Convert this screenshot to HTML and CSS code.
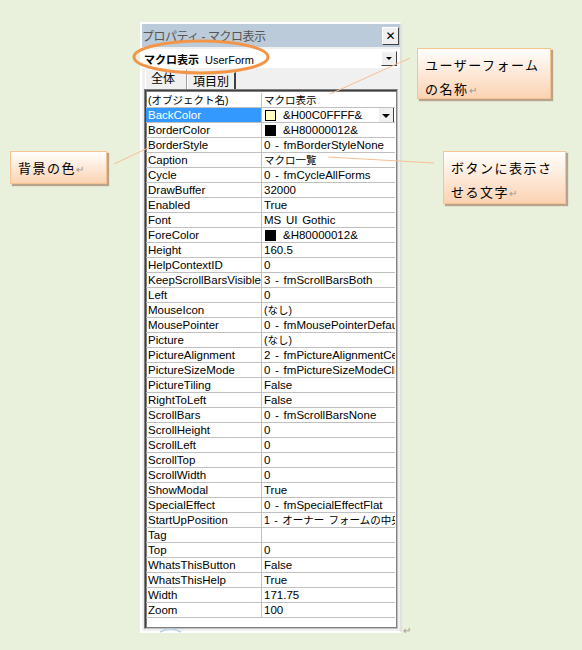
FILE: index.html
```html
<!DOCTYPE html>
<html lang="ja">
  <head>
    <meta charset="UTF-8">
    <title>プロパティ - マクロ表示</title>
    <link rel="stylesheet" href="styles.css">
  </head>
  <body>
  <div class="page">
    <div class="window">
      <div class="titlebar">
        <span class="title">プロパティ - マクロ表示</span>
        <span class="close">&#x2715;</span>
      </div>
      <div class="combo">
        <span class="combo-text"><b>マクロ表示</b> UserForm</span>
        <span class="drop"></span>
      </div>
      <div class="tabs">
        <span class="tab active">全体</span>
        <span class="tab">項目別</span>
      </div>
      <div class="grid">
        <div class="row"><span class="name ja">(オブジェクト名)</span><span class="val ja">マクロ表示</span></div>
        <div class="row"><span class="name selected">BackColor</span><span class="val"><i class="swatch pale"></i>&amp;H00C0FFFF&amp;<span class="drop small"></span></span></div>
        <div class="row"><span class="name">BorderColor</span><span class="val"><i class="swatch"></i>&amp;H80000012&amp;</span></div>
        <div class="row"><span class="name">BorderStyle</span><span class="val">0 - fmBorderStyleNone</span></div>
        <div class="row"><span class="name">Caption</span><span class="val ja">マクロ一覧</span></div>
        <div class="row"><span class="name">Cycle</span><span class="val">0 - fmCycleAllForms</span></div>
        <div class="row"><span class="name">DrawBuffer</span><span class="val">32000</span></div>
        <div class="row"><span class="name">Enabled</span><span class="val">True</span></div>
        <div class="row"><span class="name">Font</span><span class="val">MS UI Gothic</span></div>
        <div class="row"><span class="name">ForeColor</span><span class="val"><i class="swatch"></i>&amp;H80000012&amp;</span></div>
        <div class="row"><span class="name">Height</span><span class="val">160.5</span></div>
        <div class="row"><span class="name">HelpContextID</span><span class="val">0</span></div>
        <div class="row"><span class="name">KeepScrollBarsVisible</span><span class="val">3 - fmScrollBarsBoth</span></div>
        <div class="row"><span class="name">Left</span><span class="val">0</span></div>
        <div class="row"><span class="name">MouseIcon</span><span class="val ja">(なし)</span></div>
        <div class="row"><span class="name">MousePointer</span><span class="val">0 - fmMousePointerDefault</span></div>
        <div class="row"><span class="name">Picture</span><span class="val ja">(なし)</span></div>
        <div class="row"><span class="name">PictureAlignment</span><span class="val">2 - fmPictureAlignmentCenter</span></div>
        <div class="row"><span class="name">PictureSizeMode</span><span class="val">0 - fmPictureSizeModeClip</span></div>
        <div class="row"><span class="name">PictureTiling</span><span class="val">False</span></div>
        <div class="row"><span class="name">RightToLeft</span><span class="val">False</span></div>
        <div class="row"><span class="name">ScrollBars</span><span class="val">0 - fmScrollBarsNone</span></div>
        <div class="row"><span class="name">ScrollHeight</span><span class="val">0</span></div>
        <div class="row"><span class="name">ScrollLeft</span><span class="val">0</span></div>
        <div class="row"><span class="name">ScrollTop</span><span class="val">0</span></div>
        <div class="row"><span class="name">ScrollWidth</span><span class="val">0</span></div>
        <div class="row"><span class="name">ShowModal</span><span class="val">True</span></div>
        <div class="row"><span class="name">SpecialEffect</span><span class="val">0 - fmSpecialEffectFlat</span></div>
        <div class="row"><span class="name">StartUpPosition</span><span class="val ja">1 - オーナー フォームの中央</span></div>
        <div class="row"><span class="name">Tag</span><span class="val"></span></div>
        <div class="row"><span class="name">Top</span><span class="val">0</span></div>
        <div class="row"><span class="name">WhatsThisButton</span><span class="val">False</span></div>
        <div class="row"><span class="name">WhatsThisHelp</span><span class="val">True</span></div>
        <div class="row"><span class="name">Width</span><span class="val">171.75</span></div>
        <div class="row"><span class="name">Zoom</span><span class="val">100</span></div>
      </div>
    </div>
    <span class="ret after-window">&#x21B5;</span>

    <!-- 注釈: 丸囲みと引き出し線 -->
    <svg class="marks" width="582" height="650" viewBox="0 0 582 650">
      <ellipse cx="201" cy="57" rx="67" ry="16" fill="none" stroke="#f39548" stroke-width="3"/>
      <line x1="330" y1="94" x2="410" y2="58" stroke="#f8bf94" stroke-width="1"/>
      <line x1="114" y1="164" x2="150" y2="147" stroke="#f8bf94" stroke-width="1"/>
      <line x1="328" y1="157" x2="434" y2="163" stroke="#f8bf94" stroke-width="1"/>
      <path d="M160 632 Q170 626 181 632" fill="none" stroke="#b9d3e6" stroke-width="1.5"/>
    </svg>
    <div class="note note-name">ユーザーフォーム<br>の名称<span class="ret">&#x21B5;</span></div>
    <div class="note note-back">背景の色<span class="ret">&#x21B5;</span></div>
    <div class="note note-caption">ボタンに表示さ<br>せる文字<span class="ret">&#x21B5;</span></div>
  </div>
  </body>
</html>
```

FILE: styles.css
```css
html, body {
  margin: 0;
  height: 100%;
}
body {
  background-color: #e9f0dc;
  font-family: "Liberation Sans", "Noto Sans CJK JP", sans-serif;
  font-size: 11.5px;
  color: #000;
}
.page {
  position: relative;
  width: 582px;
  height: 650px;
  padding: 22px 0 0 140px;
  box-sizing: border-box;
}
.window {
  width: 262px;
  height: 611px;
  box-sizing: border-box;
  background-color: #f0f0f0;
  border: 2px solid #fff;
  border-right-color: #e0e0e0;
  display: flex;
  flex-direction: column;
}
.titlebar {
  height: 23px;
  background-color: #bccbd9;
  display: flex;
  align-items: center;
  justify-content: space-between;
  padding: 0 1px 0 0;
}
.title {
  color: #555;
  font-size: 12px;
  letter-spacing: -0.5px;
}
.close {
  width: 15px;
  height: 16px;
  background-color: #f0f0f0;
  border: 1px solid #fff;
  border-right-color: #404040;
  border-bottom-color: #404040;
  font-size: 12px;
  font-weight: bold;
  line-height: 16px;
  text-align: center;
  font-family: "DejaVu Sans", sans-serif;
}
.combo {
  margin-top: 2px;
  height: 19px;
  background-color: #fff;
  display: flex;
  align-items: center;
  justify-content: space-between;
  padding: 0 3px 0 2px;
}
.combo-text {
  font-size: 11px;
}
.combo-text b {
  font-size: 11px;
  margin-right: 3px;
}
.drop {
  width: 14px;
  height: 13px;
  background-color: #f0f0f0;
  border: 1px solid #fff;
  border-right-color: #404040;
  border-bottom-color: #404040;
  position: relative;
}
.drop::after {
  content: "";
  position: absolute;
  left: 4px;
  top: 5px;
  border: 3px solid transparent;
  border-top: 3px solid #000;
  border-bottom: 0;
}
.drop.small {
  height: 15px;
  margin-left: auto;
  margin-right: 1px;
}
.drop.small::after {
  left: 3px;
  top: 6px;
  border-width: 4px 4px 0;
}
.tabs {
  display: flex;
  align-items: flex-end;
  height: 20px;
  padding-left: 3px;
  margin-top: 1px;
}
.tab {
  height: 16px;
  padding: 0 5px;
  border: 1px solid #fff;
  border-right: 2px solid #404040;
  border-bottom: 0;
  font-size: 12px;
  line-height: 16px;
  font-family: "Noto Sans CJK JP", sans-serif;
}
.tab.active {
  height: 19px;
  width: 30px;
  border-right-width: 1px;
  border-right-color: #a0a0a0;
}
.grid {
  margin: 0 2px 2px 2px;
  flex: 1;
  background-color: #fff;
  border: 1px solid #808080;
  border-right-color: #c0c0c0;
  border-bottom-color: #c0c0c0;
  box-shadow: inset 1px 1px 0 #404040, inset 2px 2px 0 #808080, inset -1px -1px 0 #808080;
  padding: 3px 2px 0 1px;
  display: flex;
  flex-direction: column;
}
.row {
  display: grid;
  grid-template-columns: 116px 1fr;
  height: 15px;
  border-bottom: 1px solid #c0c0c0;
  box-sizing: border-box;
  line-height: 14px;
  white-space: nowrap;
}
.name {
  border-right: 1px solid #c0c0c0;
  padding-left: 2px;
  overflow: hidden;
}
.name.selected {
  background-color: #3399ff;
  color: #fff;
}
.val {
  padding-left: 2px;
  overflow: hidden;
  display: flex;
  align-items: center;
  word-spacing: 1.5px;
}
.ja {
  font-size: 10.5px;
}
.swatch {
  display: inline-block;
  width: 9px;
  height: 9px;
  background-color: #000;
  border: 1px solid #000;
  margin: 0 7px 0 1px;
}
.swatch.pale {
  background-color: #ffffc0;
}
.ret {
  color: #999;
  font-size: 10px;
  letter-spacing: 0;
}
.after-window {
  position: absolute;
  left: 403px;
  top: 625px;
}
.marks {
  position: absolute;
  left: 0;
  top: 0;
  pointer-events: none;
}
.note {
  position: absolute;
  box-sizing: border-box;
  border: 1px solid #f5c490;
  background: linear-gradient(#fffefd, #fbd3b3);
  box-shadow: 2px 2px 1px #b8a48c;
  font-family: "Noto Sans CJK JP", sans-serif;
  font-size: 13px;
  line-height: 24px;
  letter-spacing: 1.5px;
  padding: 4px 4px 4px 7px;
  white-space: nowrap;
}
.note-name {
  left: 417px;
  top: 48px;
  width: 134px;
  height: 51px;
}
.note-back {
  left: 10px;
  top: 151px;
  width: 97px;
  height: 33px;
}
.note-caption {
  left: 443px;
  top: 151px;
  width: 123px;
  height: 53px;
}
```
